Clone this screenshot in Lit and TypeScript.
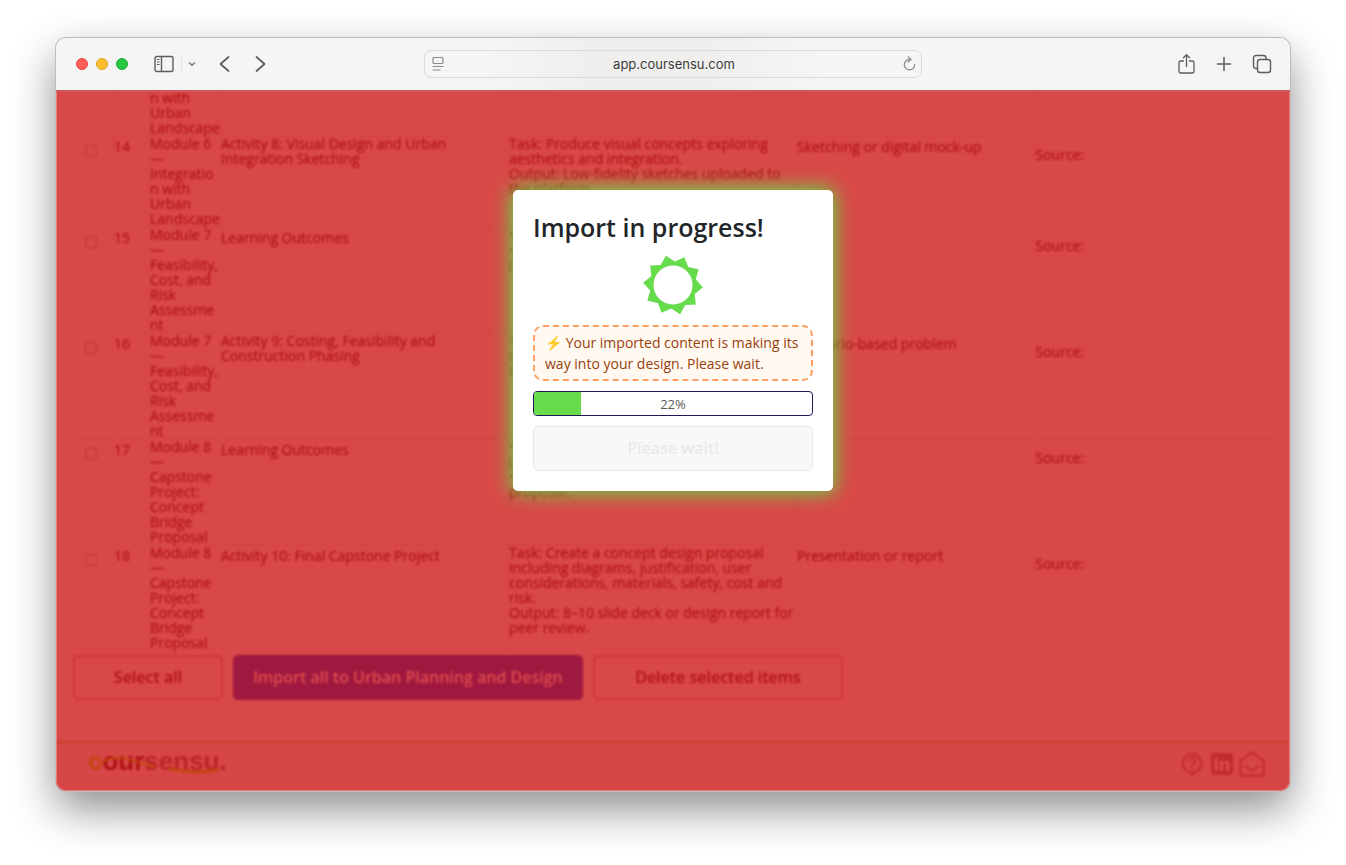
import { LitElement, html, svg, css, nothing } from "lit";
import { customElement, property } from "lit/decorators.js";

interface Row {
  n: string;
  module: string;
  title: string;
  detail: string;
  tool: string;
}

const MODULE_6 = "Module 6\n—\nIntegratio\nn with\nUrban\nLandscape";
const MODULE_7 = "Module 7\n—\nFeasibility,\nCost, and\nRisk\nAssessme\nnt";
const MODULE_8 = "Module 8\n—\nCapstone\nProject:\nConcept\nBridge\nProposal";

const ROWS: Row[] = [
  { n: "", module: "\n\n\nn with\nUrban\nLandscape", title: "", detail: "", tool: "" },
  {
    n: "14",
    module: MODULE_6,
    title: "Activity 8: Visual Design and Urban\nIntegration Sketching",
    detail:
      "Task: Produce visual concepts exploring\naesthetics and integration.\nOutput: Low-fidelity sketches uploaded to\nthe platform.",
    tool: "Sketching or digital mock-up",
  },
  { n: "15", module: MODULE_7, title: "Learning Outcomes", detail: "•\n•\n(", tool: "" },
  {
    n: "16",
    module: MODULE_7,
    title: "Activity 9: Costing, Feasibility and\nConstruction Phasing",
    detail: "T\nc\nO",
    tool: "Scenario-based problem",
  },
  { n: "17", module: MODULE_8, title: "Learning Outcomes", detail: "•\n(\n•\nproposal.", tool: "" },
  {
    n: "18",
    module: MODULE_8,
    title: "Activity 10: Final Capstone Project",
    detail:
      "Task: Create a concept design proposal\nincluding diagrams, justification, user\nconsiderations, materials, safety, cost and\nrisk.\nOutput: 8–10 slide deck or design report for\npeer review.",
    tool: "Presentation or report",
  },
];

@customElement("browser-toolbar")
export class BrowserToolbar extends LitElement {
  static styles = css`
    :host {
      display: grid;
      grid-template-columns: 1fr minmax(0, 498px) 1fr;
      align-items: center;
      height: 52px;
      border-bottom: 1px solid #bd5a5a;
      background: linear-gradient(90deg, #f5f5f5 35%, #f0efed 43%, #f0efed 53%, #f5f5f5 62%);
      color: #5c5c5c;
    }
    .left,
    .right {
      display: flex;
      align-items: center;
    }
    .left {
      padding-left: 20px;
    }
    .right {
      justify-content: flex-end;
      gap: 18px;
      padding-right: 18px;
    }
    .lights {
      display: flex;
      gap: 8px;
      margin-right: 26px;
    }
    .light {
      box-sizing: border-box;
      width: 12px;
      height: 12px;
      border: 1px solid #e2463f;
      border-radius: 50%;
      background: #ff5f57;
    }
    .light.min {
      border-color: #e0a024;
      background: #febc2e;
    }
    .light.max {
      border-color: #1dab2c;
      background: #28c840;
    }
    button {
      display: flex;
      padding: 0;
      border: 0;
      background: none;
      color: inherit;
    }
    svg {
      display: block;
      fill: none;
      stroke: currentColor;
      stroke-linecap: round;
      stroke-linejoin: round;
    }
    .divider {
      width: 1px;
      height: 18px;
      margin: 0 4px 0 7px;
      background: #e2e2e2;
    }
    .menu {
      color: #858585;
    }
    .back {
      margin-left: 17px;
      margin-right: 15px;
    }
    .address {
      box-sizing: border-box;
      display: flex;
      align-items: center;
      height: 28px;
      padding: 0 5px;
      border: 1px solid #dadada;
      border-radius: 7px;
      color: #8c8c8c;
    }
    input {
      flex: 1;
      min-width: 0;
      padding: 0;
      border: 0;
      outline: 0;
      background: none;
      color: #3c3c3c;
      font: 13px/18px Inter, sans-serif;
      text-align: center;
    }
  `;

  render() {
    return html`
      <div class="left">
        <div class="lights">
          <button class="light" aria-label="Close"></button>
          <button class="light min" aria-label="Minimise"></button>
          <button class="light max" aria-label="Zoom"></button>
        </div>
        <button aria-label="Sidebar">
          <svg width="20" height="18" viewBox="0 0 20 18" stroke-width="1.4">
            <rect x="1" y="1.5" width="18" height="15" rx="2" />
            <path d="M7.5 1.5v15" />
            <path d="M3.3 4.5h1.8M3.3 7h1.8M3.3 9.5h1.8" stroke-width="1.1" />
          </svg>
        </button>
        <span class="divider"></span>
        <button class="menu" aria-label="Tab groups">
          <svg width="12" height="12" viewBox="0 0 12 12" stroke-width="1.5">
            <path d="M3.4 4.8 6 7.4 8.6 4.8" />
          </svg>
        </button>
        <button class="back" aria-label="Back">
          <svg width="20" height="20" viewBox="0 0 20 20" stroke-width="1.7">
            <path d="M13.5 3 5.500 10l8 7" />
          </svg>
        </button>
        <button aria-label="Forward">
          <svg width="20" height="20" viewBox="0 0 20 20" stroke-width="1.7">
            <path d="m6.500 3 8 7-8 7" />
          </svg>
        </button>
      </div>
      <label class="address">
        <svg width="16" height="16" viewBox="0 0 16 16" stroke-width="1.2">
          <rect x="3" y="1.5" width="10" height="6" rx="1" />
          <path d="M3 10.5h10M3 14h7" />
        </svg>
        <input type="text" aria-label="Address" .value=${"app.coursensu.com"} />
        <svg width="14" height="16" viewBox="0 0 14 16" stroke-width="1.3">
          <path d="M7.5 3.500a5.200 5.200 0 1 0 5.200 5.200" />
          <path d="m6.200 .9 2.800 2.600-2.800 2.600" />
        </svg>
      </label>
      <div class="right">
        <button aria-label="Share">
          <svg width="20" height="22" viewBox="0 0 20 22" stroke-width="1.3">
            <path d="M7.500 8H5a2 2 0 0 0-2 2v8a2 2 0 0 0 2 2h11a2 2 0 0 0 2-2v-8a2 2 0 0 0-2-2h-2.500" />
            <path d="M10.500 13.500V2M7.500 4.800l3-3.200 3 3.200" />
          </svg>
        </button>
        <button aria-label="New tab">
          <svg width="20" height="20" viewBox="0 0 20 20" stroke-width="1.5">
            <path d="M10 3.500v13M3.500 10h13" />
          </svg>
        </button>
        <button aria-label="Tab overview">
          <svg width="20" height="20" viewBox="0 0 20 20" stroke-width="1.4">
            <rect x="5.500" y="5.500" width="13" height="13" rx="2.500" />
            <path d="M5.500 14.500H4A2.500 2.500 0 0 1 1.500 12V4A2.500 2.500 0 0 1 4 1.500h7.500A2.500 2.500 0 0 1 14 4v1.500" />
          </svg>
        </button>
      </div>
    `;
  }
}

@customElement("import-table")
export class ImportTable extends LitElement {
  static styles = css`
    :host {
      display: block;
    }
    table {
      width: 100%;
      table-layout: fixed;
      border-spacing: 0;
    }
    .pick {
      width: 40px;
    }
    .num {
      width: 36px;
    }
    .mod {
      width: 71px;
    }
    .wide {
      width: 24%;
    }
    td {
      padding: 0;
      border-top: 1px solid #d04243;
      border-left: 1px solid #d24445;
      line-height: 15px;
      vertical-align: top;
      white-space: pre;
    }
    td:first-child {
      padding: 9px 0 0 12px;
      border-left: 0;
    }
    .single {
      padding-top: 3px;
    }
    .source {
      padding-top: 11px;
    }
    input {
      appearance: none;
      display: block;
      box-sizing: border-box;
      width: 12px;
      height: 12px;
      margin: 0;
      border: 1px solid #c23033;
      border-radius: 3px;
    }
  `;

  render() {
    return html`
      <table>
        <colgroup>
          <col class="pick" />
          <col class="num" />
          <col class="mod" />
          <col class="wide" />
          <col class="wide" />
          <col />
          <col />
        </colgroup>
        <tbody>
          ${ROWS.map(
            (r) => html`<tr>
              <td><input type="checkbox" aria-label=${"Select row " + r.n} /></td>
              <td class="single">${r.n}</td>
              <td>${r.module}</td>
              <td class=${r.title.includes("\n") ? "" : "single"}>${r.title}</td>
              <td>${r.detail}</td>
              <td class="single">${r.tool}</td>
              <td class="source">${r.n ? "Source:" : nothing}</td>
            </tr>`
          )}
        </tbody>
      </table>
    `;
  }
}

@customElement("site-footer")
export class SiteFooter extends LitElement {
  static styles = css`
    :host {
      box-sizing: border-box;
      display: flex;
      align-items: flex-start;
      justify-content: space-between;
      height: 50px;
      padding: 4px 25px 0 32px;
      border-top: 2px solid #cb3e2c;
      background: #d64646;
    }
    .logo {
      position: relative;
      color: #bc2429;
      font: 700 26px/28px "Liberation Sans", sans-serif;
      text-decoration: none;
    }
    .c {
      color: #c2460f;
    }
    .our {
      color: #ad1014;
    }
    .swoosh {
      position: absolute;
      left: 0;
      top: 0;
      fill: none;
      stroke: #c2460f;
      stroke-linecap: round;
    }
    nav {
      display: flex;
      align-items: center;
      gap: 4px;
      padding-top: 4px;
    }
    a {
      color: #c22b2f;
    }
    nav svg {
      display: block;
      fill: none;
      stroke: currentColor;
      stroke-width: 2;
      stroke-linecap: round;
      stroke-linejoin: round;
    }
    .in {
      fill: #dc5252;
      stroke: none;
      font: 700 19px "Liberation Sans", sans-serif;
    }
  `;

  render() {
    return html`
      <a class="logo" href="#"
        ><span class="c">c</span><span class="our">our</span>sensu.
        <svg class="swoosh" width="136" height="28" viewBox="0 0 136 28">
          <path d="M12 17c6-5 14-7 22-6 14 2 22 7 34 9" stroke-width="2" />
          <path d="M82 22c14 3 32 4 47 1" stroke-width="3" />
        </svg>
      </a>
      <nav>
        <a href="#" aria-label="Help">
          <svg width="26" height="26" viewBox="0 0 26 26">
            <path d="M13 24v-2.500a9.300 9.300 0 1 1 2.500-.3z" />
            <path d="M10.200 9.500a3 3 0 1 1 4.600 2.600c-1.300.8-1.800 1.300-1.800 2.600M13 17.500v.2" />
          </svg>
        </a>
        <a href="#" aria-label="LinkedIn">
          <svg width="26" height="26" viewBox="0 0 26 26">
            <rect x="2" y="2" width="22" height="22" rx="4" fill="currentColor" stroke="none" />
            ${svg`<text class="in" x="13" y="20" text-anchor="middle">in</text>`}
          </svg>
        </a>
        <a href="#" aria-label="Email">
          <svg width="26" height="26" viewBox="0 0 26 26">
            <path d="M1.500 9.500 13 1.500l11.500 8v15h-23z" />
            <path d="m6 15 7 4.500 7-4.500" />
          </svg>
        </a>
      </nav>
    `;
  }
}

@customElement("import-dialog")
export class ImportDialog extends LitElement {
  @property({ type: Number }) percent = 22;
  @property({ type: Number }) filled = 17;

  static styles = css`
    :host {
      box-sizing: border-box;
      display: flex;
      flex-direction: column;
      gap: 10px;
      width: 320px;
      padding: 20px;
      border-radius: 5px;
      background: #fff;
      box-shadow: 0 0 20px 2px #62dc46;
    }
    h2 {
      margin: 0;
      color: #212529;
      font-size: 25px;
      font-weight: 600;
      line-height: 35px;
      white-space: nowrap;
    }
    .sun {
      align-self: center;
      display: block;
      fill: #66db4c;
    }
    .hole {
      fill: #fff;
    }
    .note {
      margin: 0;
      padding: 5px 10px;
      border: 2px dashed #fb9f62;
      border-radius: 10px;
      background: #fff9f2;
      color: #9a3f0c;
      font-size: 14px;
      line-height: 21px;
      white-space: nowrap;
    }
    .bar {
      box-sizing: border-box;
      display: grid;
      height: 25px;
      border: 1px solid #1f1857;
      border-radius: 4px;
      overflow: hidden;
      color: #5d5d5d;
      font-size: 13px;
      line-height: 25px;
      text-align: center;
    }
    .fill,
    .value {
      grid-area: 1 / 1;
    }
    .fill {
      background: #66db4c;
    }
    button {
      height: 45px;
      border: 1px solid #e3e8ea;
      border-radius: 5px;
      background: #f8f8f8;
      color: #e6eaec;
      font: inherit;
      font-size: 16px;
      font-weight: 600;
    }
  `;

  render() {
    const points = Array.from({ length: 20 }, (_, i) => {
      const a = ((4.4 + i * 18) * Math.PI) / 180;
      const r = i % 2 ? 23.5 : 30;
      return `${(30 + r * Math.cos(a)).toFixed(1)},${(30 + r * Math.sin(a)).toFixed(1)}`;
    }).join(" ");
    return html`
      <h2 id="title">Import in progress!</h2>
      <svg class="sun" width="60" height="60" viewBox="0 0 60 60" aria-hidden="true">
        <polygon points=${points} />
        <circle class="hole" cx="30" cy="30" r="19.5" />
      </svg>
      <p class="note">⚡ Your imported content is making its<br />way into your design. Please wait.</p>
      <div class="bar" role="progressbar" aria-labelledby="title" aria-valuenow=${this.percent}>
        <div class="fill" style="width:${this.filled}%"></div>
        <span class="value">${this.percent}%</span>
      </div>
      <button disabled>Please wait!</button>
    `;
  }
}

@customElement("app-root")
export class AppRoot extends LitElement {
  static styles = css`
    :host {
      box-sizing: border-box;
      display: flex;
      height: 100vh;
      padding: 38px 56px 74px;
      overflow: hidden;
      background: #fff;
      color: #aa0a0e;
      font: 14px/15px "Open Sans", sans-serif;
    }
    .window {
      flex: 1;
      min-width: 0;
      display: flex;
      flex-direction: column;
      border-radius: 10px;
      overflow: hidden;
      box-shadow: 0 0 0 1px #bdbdbd, 0 18px 44px rgba(0, 0, 0, 0.45);
    }
    .page {
      position: relative;
      flex: 1;
      min-height: 0;
      overflow: hidden;
      display: flex;
      flex-direction: column;
      justify-content: flex-end;
      background: #d94848;
    }
    .edge {
      position: absolute;
      inset: 0;
      border: 1px solid #e77f7f;
      border-top-color: #dd5555;
      border-radius: 0 0 10px 10px;
      pointer-events: none;
    }
    .content {
      flex: none;
      filter: blur(1px);
    }
    main {
      padding: 0 17px 41px;
    }
    .actions {
      display: flex;
      gap: 10px;
      margin-top: 5px;
    }
    .actions button {
      height: 45px;
      padding: 0;
      border: 2px solid #cf3638;
      border-radius: 5px;
      background: none;
      color: #b01115;
      font: inherit;
      font-size: 16px;
      font-weight: 600;
    }
    .small {
      width: 150px;
    }
    .medium {
      width: 250px;
    }
    .actions .primary {
      width: 350px;
      border-color: #9f183f;
      background: #9f183f;
      color: #e04e4e;
    }
    import-dialog {
      position: absolute;
      top: 99px;
      left: calc(50% - 160px);
    }
  `;

  render() {
    return html`
      <div class="window">
        <browser-toolbar></browser-toolbar>
        <div class="page">
          <div class="content">
            <main>
              <import-table></import-table>
              <div class="actions">
                <button class="small">Select all</button>
                <button class="primary">Import all to Urban Planning and Design</button>
                <button class="medium">Delete selected items</button>
              </div>
            </main>
            <site-footer></site-footer>
          </div>
          <div class="edge"></div>
          <import-dialog role="dialog" aria-modal="true" aria-label="Import in progress!"></import-dialog>
        </div>
      </div>
    `;
  }
}
